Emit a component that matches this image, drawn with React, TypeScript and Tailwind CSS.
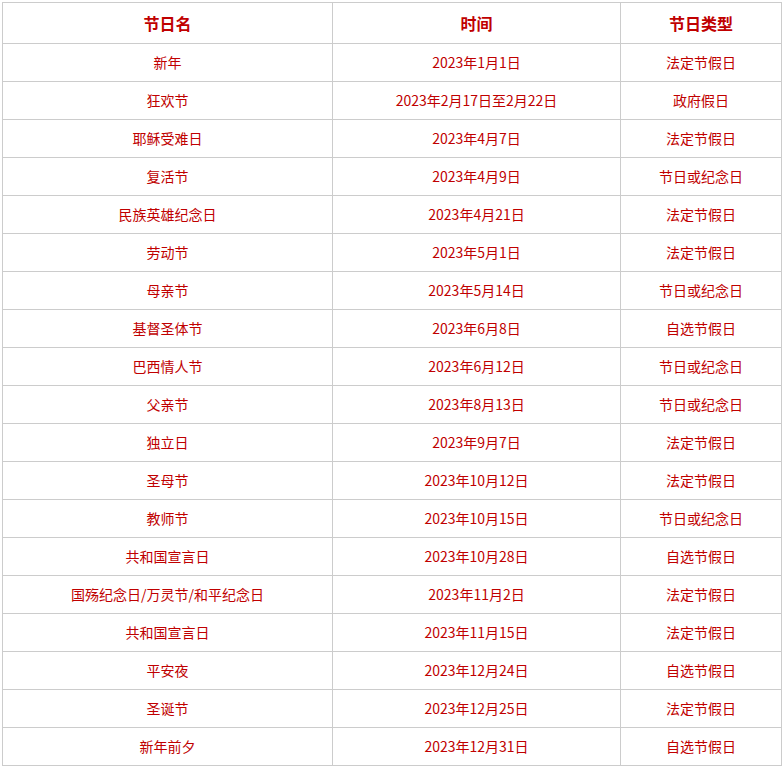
import React from "react";

const rows: [string, string, string][] = [
  ["新年", "2023年1月1日", "法定节假日"],
  ["狂欢节", "2023年2月17日至2月22日", "政府假日"],
  ["耶稣受难日", "2023年4月7日", "法定节假日"],
  ["复活节", "2023年4月9日", "节日或纪念日"],
  ["民族英雄纪念日", "2023年4月21日", "法定节假日"],
  ["劳动节", "2023年5月1日", "法定节假日"],
  ["母亲节", "2023年5月14日", "节日或纪念日"],
  ["基督圣体节", "2023年6月8日", "自选节假日"],
  ["巴西情人节", "2023年6月12日", "节日或纪念日"],
  ["父亲节", "2023年8月13日", "节日或纪念日"],
  ["独立日", "2023年9月7日", "法定节假日"],
  ["圣母节", "2023年10月12日", "法定节假日"],
  ["教师节", "2023年10月15日", "节日或纪念日"],
  ["共和国宣言日", "2023年10月28日", "自选节假日"],
  ["国殇纪念日/万灵节/和平纪念日", "2023年11月2日", "法定节假日"],
  ["共和国宣言日", "2023年11月15日", "法定节假日"],
  ["平安夜", "2023年12月24日", "自选节假日"],
  ["圣诞节", "2023年12月25日", "法定节假日"],
  ["新年前夕", "2023年12月31日", "自选节假日"],
];

const widths = ["w-[330px]", "w-[288px]", "w-[161px]"];

export default function App() {
  return (
    <div className="bg-white min-h-[767px] pt-[2px] pl-[2px]" style={{ fontFamily: '"Noto Sans CJK SC", "Microsoft YaHei", sans-serif' }}>
      <div className="w-[780px] border-l border-t border-[#cccccc] text-[#c00000]">
        <div className="flex h-[41px]">
          {["节日名", "时间", "节日类型"].map((h, i) => (
            <div key={h} className={`${widths[i]} border-r border-b border-[#cccccc] flex items-center justify-center text-[16px] font-bold`}>
              {h}
            </div>
          ))}
        </div>
        {rows.map((r, ri) => (
          <div key={ri} className="flex h-[38px]">
            {r.map((c, i) => (
              <div key={i} className={`${widths[i]} border-r border-b border-[#cccccc] flex items-center justify-center text-[14px]`}>
                {c}
              </div>
            ))}
          </div>
        ))}
      </div>
    </div>
  );
}
